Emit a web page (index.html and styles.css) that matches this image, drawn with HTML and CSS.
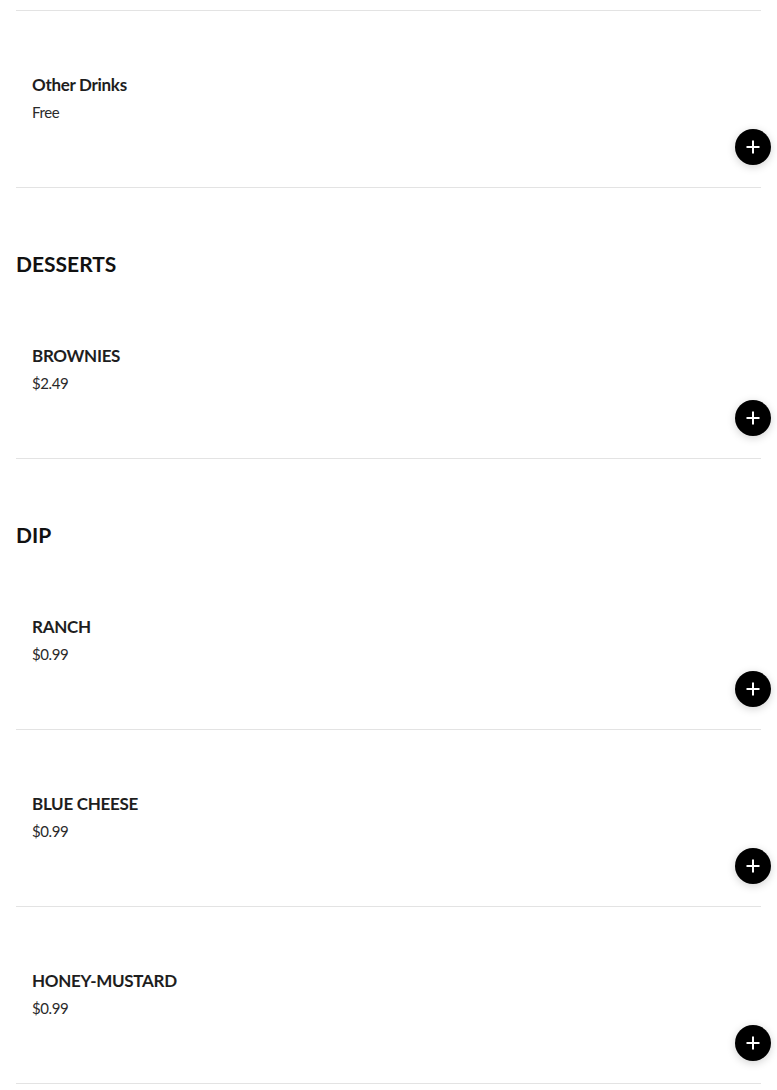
FILE: index.html
```html
<!DOCTYPE html>
<html lang="en">
<head>
<meta charset="utf-8">
<title>Menu</title>
<link rel="stylesheet" href="styles.css">
</head>
<body>
<main class="menu">
  <div class="item-stub"></div>

  <div class="item">
    <div class="item-name">Other Drinks</div>
    <div class="item-price">Free</div>
    <div class="item-actions">
      <button class="add-btn" aria-label="Add"><svg viewBox="0 0 16 16" width="16" height="16"><path d="M8 1.5v13M1.5 8h13" stroke="#fff" stroke-width="2" fill="none"/></svg></button>
    </div>
  </div>

  <h2 class="section-title">DESSERTS</h2>
  <div class="item">
    <div class="item-name">BROWNIES</div>
    <div class="item-price">$2.49</div>
    <div class="item-actions">
      <button class="add-btn" aria-label="Add"><svg viewBox="0 0 16 16" width="16" height="16"><path d="M8 1.5v13M1.5 8h13" stroke="#fff" stroke-width="2" fill="none"/></svg></button>
    </div>
  </div>

  <h2 class="section-title">DIP</h2>
  <div class="item">
    <div class="item-name">RANCH</div>
    <div class="item-price">$0.99</div>
    <div class="item-actions">
      <button class="add-btn" aria-label="Add"><svg viewBox="0 0 16 16" width="16" height="16"><path d="M8 1.5v13M1.5 8h13" stroke="#fff" stroke-width="2" fill="none"/></svg></button>
    </div>
  </div>
  <div class="item">
    <div class="item-name">BLUE CHEESE</div>
    <div class="item-price">$0.99</div>
    <div class="item-actions">
      <button class="add-btn" aria-label="Add"><svg viewBox="0 0 16 16" width="16" height="16"><path d="M8 1.5v13M1.5 8h13" stroke="#fff" stroke-width="2" fill="none"/></svg></button>
    </div>
  </div>
  <div class="item">
    <div class="item-name">HONEY-MUSTARD</div>
    <div class="item-price">$0.99</div>
    <div class="item-actions">
      <button class="add-btn" aria-label="Add"><svg viewBox="0 0 16 16" width="16" height="16"><path d="M8 1.5v13M1.5 8h13" stroke="#fff" stroke-width="2" fill="none"/></svg></button>
    </div>
  </div>
</main>
</body>
</html>
```

FILE: styles.css
```css
html, body {
  margin: 0;
  padding: 0;
  background: #fff;
}
body {
  font-family: Lato, "Noto Sans", "Liberation Sans", sans-serif;
  color: #222;
}
.menu {
  margin: 0 16px;
}
.item-stub {
  height: 10px;
  border-bottom: 1px solid #e3e3e3;
}
.item {
  display: flex;
  flex-direction: column;
  box-sizing: border-box;
  height: 177px;
  padding: 62px 0 0 16px;
  border-bottom: 1px solid #e3e3e3;
}
.item-name {
  font-size: 17px;
  font-weight: 700;
  line-height: 24px;
  color: #1e1e1e;
  letter-spacing: -0.3px;
}
.item-price {
  margin-top: 5px;
  font-size: 15px;
  line-height: 20px;
  color: #2a2a2a;
  letter-spacing: -0.4px;
}
.item-actions {
  display: flex;
  justify-content: flex-end;
  margin-top: 7px;
  margin-right: -10px;
}
.add-btn {
  width: 36px;
  height: 36px;
  border-radius: 50%;
  border: none;
  padding: 0;
  background: #000;
  display: flex;
  align-items: center;
  justify-content: center;
  box-shadow: 0 2px 8px rgba(0, 0, 0, 0.18);
  cursor: pointer;
}
.section-title {
  margin: 0;
  padding: 62px 0 4px;
  font-size: 21px;
  line-height: 28px;
  font-weight: 700;
  color: #111;
}
```
